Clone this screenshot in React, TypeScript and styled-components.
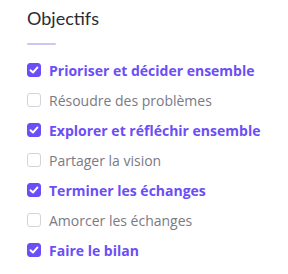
import React from "react";
import styled, { createGlobalStyle } from "styled-components";

const GlobalStyle = createGlobalStyle`
  html, body {
    margin: 0;
    padding: 0;
    background: #ffffff;
    font-family: "Open Sans", "Noto Sans", sans-serif;
  }
`;

const OBJECTIVES = [
  { label: "Prioriser et décider ensemble", checked: true },
  { label: "Résoudre des problèmes", checked: false },
  { label: "Explorer et réfléchir ensemble", checked: true },
  { label: "Partager la vision", checked: false },
  { label: "Terminer les échanges", checked: true },
  { label: "Amorcer les échanges", checked: false },
  { label: "Faire le bilan", checked: true },
];

const App: React.FC = () => {
  return (
    <>
      <GlobalStyle />
      <Panel>
        <Title>Objectifs</Title>
        <TitleBar />
        <List>
          {OBJECTIVES.map((item) => (
            <Row key={item.label}>
              <Box $checked={item.checked}>
                {item.checked && (
                  <svg width="10" height="10" viewBox="0 0 10 10">
                    <path
                      d="M1.5 5.2 L4 7.5 L8.5 2.4"
                      fill="none"
                      stroke="#ffffff"
                      strokeWidth="1.9"
                      strokeLinecap="round"
                      strokeLinejoin="round"
                    />
                  </svg>
                )}
              </Box>
              <Label $checked={item.checked}>{item.label}</Label>
            </Row>
          ))}
        </List>
      </Panel>
    </>
  );
};

export default App;

const Panel = styled.div`
  padding: 6px 0 0 27px;
`;

const Title = styled.h2`
  margin: 0;
  font-family: Lato, sans-serif;
  font-size: 18px;
  font-weight: 400;
  color: #2b2b33;
  line-height: 24px;
`;

const TitleBar = styled.div`
  width: 29px;
  height: 2px;
  border-radius: 1px;
  background: #cdc6f4;
  margin-top: 13px;
`;

const List = styled.div`
  display: flex;
  flex-direction: column;
  margin-top: 10px;
`;

const Row = styled.label`
  display: flex;
  align-items: center;
  height: 30px;
  gap: 8px;
`;

const Box = styled.span<{ $checked: boolean }>`
  box-sizing: border-box;
  width: 14px;
  height: 14px;
  border-radius: 3px;
  display: flex;
  align-items: center;
  justify-content: center;
  background: ${(p) => (p.$checked ? "#6b4ef6" : "#ffffff")};
  border: 1px solid ${(p) => (p.$checked ? "#6b4ef6" : "#d3d3da")};
`;

const Label = styled.span<{ $checked: boolean }>`
  font-size: 14px;
  font-weight: ${(p) => (p.$checked ? 700 : 400)};
  color: ${(p) => (p.$checked ? "#6b4ef6" : "#7a7a84")};
`;
